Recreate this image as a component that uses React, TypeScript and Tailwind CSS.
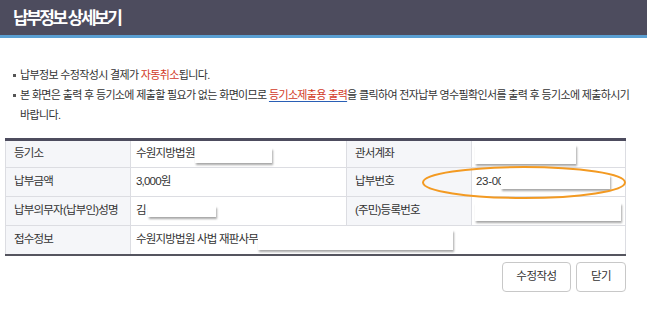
const Mask = ({ className }: { className: string }) => (
  <span className={`block bg-white shadow-[1px_2px_2px_rgba(0,0,0,0.35)] ${className}`} />
);

const label = 'bg-[#f5f6f9] border border-[#dcdde2] font-normal text-left pl-[8px] whitespace-nowrap';
const cell = 'border border-[#dcdde2]';

const App = () => {
  return (
    <div className="relative w-[647px] h-[317px] bg-white font-['Liberation_Sans','Noto_Sans_CJK_KR',sans-serif] text-[#333]">
      <div className="h-[38px] bg-[#4d4c5e] border-b-[3px] border-[#5a9fd2] flex items-center pl-[13px]">
        <h1 className="text-white text-[17px] font-bold tracking-[-2.5px] mt-[2px]">납부정보 상세보기</h1>
      </div>

      <ul className="mt-[27px] pl-[13px] w-[640px] text-[11px] tracking-[-0.65px] leading-[20px]">
        <li className="flex">
          <span className="w-[3px] h-[3px] bg-[#555] mt-[9px] mr-[4px] shrink-0" />
          <p>
            납부정보 수정작성시 결제가 <span className="text-[#d2391f]">자동취소</span>됩니다.
          </p>
        </li>
        <li className="flex">
          <span className="w-[3px] h-[3px] bg-[#555] mt-[9px] mr-[4px] shrink-0" />
          <div>
            <p className="whitespace-nowrap">
              <span>본 화면은 출력 후 등기소에 제출할 필요가 없는 화면이므로 </span>
              <a className="text-[#d2391f] underline decoration-[#2a5fb5] underline-offset-2">등기소제출용 출력</a>
              <span>을 클릭하여 전자납부 영수필확인서를 출력 후 등기소에 제출하시기</span>
            </p>
            <p>바랍니다.</p>
          </div>
        </li>
      </ul>

      <table className="ml-[5px] mt-[13px] w-[620px] table-fixed border-collapse text-[11.5px] tracking-[-0.8px] border-t-[3px] border-t-[#4d4c5e] border-b-2 border-b-[#55555f]">
        <colgroup>
          <col className="w-[125px]" />
          <col className="w-[216px]" />
          <col className="w-[125px]" />
          <col className="w-[154px]" />
        </colgroup>
        <tbody>
          <tr className="h-[28px]">
            <th className={label}>등기소</th>
            <td className={cell}>
              <div className="flex items-center pl-[5px] whitespace-nowrap">
                수원지방법원<Mask className="w-[77px] h-[15px] mt-[2px]" />
              </div>
            </td>
            <th className={label}>관서계좌</th>
            <td className={cell}>
              <div className="flex items-center pl-[3px]">
                <Mask className="w-[101px] h-[19px]" />
              </div>
            </td>
          </tr>
          <tr className="h-[29px]">
            <th className={label}>납부금액</th>
            <td className={`${cell} pl-[5px]`}>3,000원</td>
            <th className={label}>납부번호</th>
            <td className={cell}>
              <div className="flex items-center pl-[4px] whitespace-nowrap tracking-[-0.3px]">
                23-00<Mask className="w-[109px] h-[14px] -ml-[3px]" />
              </div>
            </td>
          </tr>
          <tr className="h-[29px]">
            <th className={label}>납부의무자(납부인)성명</th>
            <td className={cell}>
              <div className="flex items-center pl-[5px] whitespace-nowrap">
                김<Mask className="w-[68px] h-[11px] ml-[2px]" />
              </div>
            </td>
            <th className={label}>(주민)등록번호</th>
            <td className={cell}>
              <div className="flex items-center pl-[3px]">
                <Mask className="w-[146px] h-[18px] mt-[2px]" />
              </div>
            </td>
          </tr>
          <tr className="h-[29px]">
            <th className={label}>접수정보</th>
            <td colSpan={3} className={cell}>
              <div className="flex items-center pl-[5px] whitespace-nowrap">
                수원지방법원 사법 재판사무<Mask className="w-[195px] h-[20px] mt-[1px]" />
              </div>
            </td>
          </tr>
        </tbody>
      </table>

      <div className="flex justify-end gap-[5px] mt-[6px] w-[626px] text-[11.5px] tracking-[-0.5px]">
        <button className="w-[69px] h-[30px] border border-[#c8c8c8] rounded-[4px] bg-white">수정작성</button>
        <button className="w-[50px] h-[30px] border border-[#c8c8c8] rounded-[4px] bg-white">닫기</button>
      </div>

      <svg className="absolute left-[420px] top-[164px] pointer-events-none" width="210" height="40" viewBox="0 0 210 40">
        <ellipse cx="104" cy="18.5" rx="101" ry="15.5" fill="none" stroke="#f39a22" strokeWidth="2" />
      </svg>
    </div>
  );
};

export default App;
